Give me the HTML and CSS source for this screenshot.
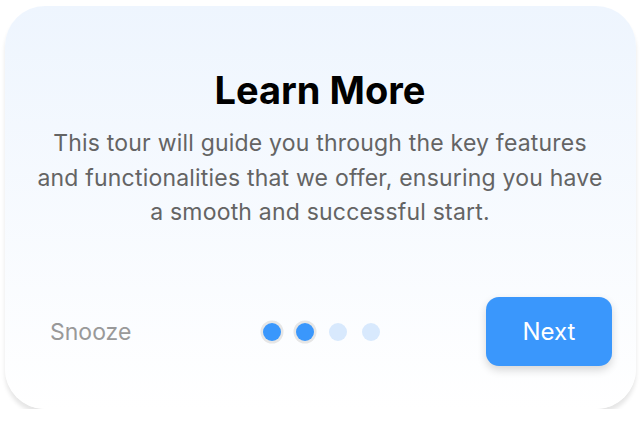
FILE: index.html
```html
<!DOCTYPE html>
<html>
<head>
<meta charset="utf-8">
<link rel="stylesheet" href="styles.css">
</head>
<body>
<div class="card">
  <h1 class="title">Learn More</h1>
  <p class="desc">This tour will guide you through the key features and functionalities that we offer, ensuring you have a smooth and successful start.</p>
  <div class="footer">
    <span class="snooze">Snooze</span>
    <div class="dots">
      <span class="dot active"></span>
      <span class="dot active"></span>
      <span class="dot"></span>
      <span class="dot"></span>
    </div>
    <button class="next">Next</button>
  </div>
</div>
</body>
</html>
```
FILE: styles.css
```css
html, body {
  margin: 0;
  padding: 0;
  background: #ffffff;
  font-family: Inter, "Noto Sans", sans-serif;
}
.card {
  box-sizing: border-box;
  margin: 6px 0 0 5px;
  width: 631px;
  height: 403px;
  border-radius: 40px;
  background: linear-gradient(180deg, #eef5fe 0%, #ffffff 100%);
  box-shadow: 0 5px 4px rgba(0, 0, 0, 0.1);
  display: flex;
  flex-direction: column;
  align-items: center;
  padding: 63px 24px 43px 45px;
}
.title {
  margin: 0;
  font-size: 38px;
  line-height: 43px;
  font-weight: 700;
  color: #000;
  padding-right: 22px;
}
.desc {
  margin: 14px 0 0 0;
  width: 574px;
  font-size: 23px;
  line-height: 34.5px;
  letter-spacing: 0.2px;
  color: #646464;
  text-align: center;
  padding-right: 22px;
}
.footer {
  margin-top: auto;
  align-self: stretch;
  display: grid;
  grid-template-columns: 1fr auto 1fr;
  align-items: center;
}
.snooze {
  font-size: 23px;
  color: #999999;
  justify-self: start;
}
.dots {
  display: flex;
  gap: 15px;
  margin-right: 19px;
}
.dot {
  width: 18px;
  height: 18px;
  border-radius: 50%;
  background: #d8e9fd;
}
.dot.active {
  background: #3a97fc;
  box-shadow: 0 0 0 2.5px #e6e6e6;
}
.next {
  justify-self: end;
  width: 126px;
  height: 69px;
  border: none;
  border-radius: 13px;
  background: #3a97fc;
  color: #fff;
  font-family: Inter, "Noto Sans", sans-serif;
  font-size: 24px;
  box-shadow: 0 4px 8px rgba(0, 0, 0, 0.16);
}
```
